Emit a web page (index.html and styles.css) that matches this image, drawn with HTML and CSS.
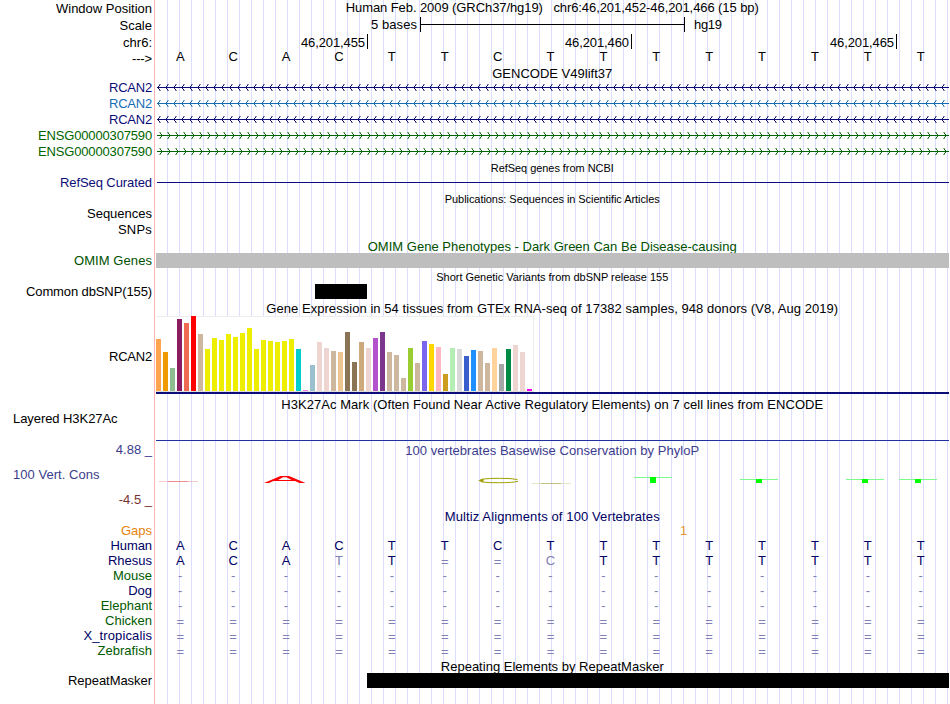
FILE: index.html
```
<!DOCTYPE html>
<html lang="en">
<head>
<meta charset="utf-8">
<title>Genome Browser hg19 chr6:46,201,452-46,201,466</title>
<link rel="stylesheet" href="styles.css">
</head>
<body>
<main class="browser">
  <div class="row h17"><div class="label pad1" data-w="96">Window Position</div><div class="title" data-w="413">Human Feb. 2009 (GRCh37/hg19) &nbsp; chr6:46,201,452-46,201,466 (15 bp)</div></div>
  <div class="row h17"><div class="label pad1">Scale</div>
    <svg class="plot" viewBox="155 17 794 17"><path class="axis" d="M420.5 17v15M684.5 17v15M420 24.5h264"/><text x="371" y="29" textLength="46">5 bases</text><text x="694" y="29" textLength="28">hg19</text></svg></div>
  <div class="row h16"><div class="label pad1">chr6:</div>
    <svg class="plot" viewBox="155 34 794 16"><path class="axis" d="M367.5 34v15M631.5 34v15M896.5 34v15"/><text x="301" y="47" textLength="64">46,201,455</text><text x="565" y="47" textLength="64">46,201,460</text><text x="830" y="47" textLength="64">46,201,465</text></svg></div>
  <div class="row h16"><div class="label pad1" data-w="20">---&gt;</div><div class="bases up1" data-seq="ACACTTCTTTTTTTT"></div></div>

  <div class="row h14"><div class="title" data-w="120">GENCODE V49lift37</div></div>
  <div class="row h16 navy"><div class="label" data-w="43">RCAN2</div><svg class="plot gene" data-dir="-1"></svg></div>
  <div class="row h16 sky"><div class="label" data-w="43">RCAN2</div><svg class="plot gene" data-dir="-1"></svg></div>
  <div class="row h16 navy"><div class="label" data-w="43">RCAN2</div><svg class="plot gene" data-dir="-1"></svg></div>
  <div class="row h16 green"><div class="label" data-w="114">ENSG00000307590</div><svg class="plot gene" data-dir="1"></svg></div>
  <div class="row h16 green"><div class="label" data-w="114">ENSG00000307590</div><svg class="plot gene" data-dir="1"></svg></div>

  <div class="row h15"><div class="title small" data-w="123">RefSeq genes from NCBI</div></div>
  <div class="row h16 navy"><div class="label" data-w="92">RefSeq Curated</div><div class="curated"></div></div>
  <div class="row h15"><div class="title small" data-w="215">Publications: Sequences in Scientific Articles</div></div>
  <div class="row h16"><div class="label" data-w="65">Sequences</div></div>
  <div class="row h17"><div class="label" data-w="34">SNPs</div></div>
  <div class="row h14 dkgreen"><div class="title" data-w="369">OMIM Gene Phenotypes - Dark Green Can Be Disease-causing</div></div>
  <div class="row h16 dkgreen"><div class="label" data-w="78">OMIM Genes</div><div class="block omim"></div></div>
  <div class="row h15"><div class="title small" data-w="232">Short Genetic Variants from dbSNP release 155</div></div>
  <div class="row h17"><div class="label" data-w="126">Common dbSNP(155)</div><div class="block snp"></div></div>

  <div class="row h15"><div class="title" data-w="572">Gene Expression in 54 tissues from GTEx RNA-seq of 17382 samples, 948 donors (V8, Aug 2019)</div></div>
  <div class="row gtex"><div class="label" data-w="43">RCAN2</div><div class="expression"><div class="bars"></div></div></div>

  <div class="row h14"><div class="title" data-w="542">H3K27Ac Mark (Often Found Near Active Regulatory Elements) on 7 cell lines from ENCODE</div></div>
  <div class="row h31"><div class="label left" data-w="104.500">Layered H3K27Ac</div><div class="h3k"></div></div>

  <div class="row cons">
    <div class="scale">
      <div class="label blue">4.88 _</div>
      <div class="label left blue" data-w="86.500">100 Vert. Cons</div>
      <div class="label maroon">-4.5 _</div>
    </div>
    <div>
      <div class="title blue pad1" data-w="294">100 vertebrates Basewise Conservation by PhyloP</div>
      <svg class="plot logo" viewBox="155 458 794 51">
        <path d="M159 481h39v1h-39z" fill="#f08080" opacity=".4"/>
        <path d="M168 481h20v1h-20z" fill="#e87070" opacity=".7"/>
        <path d="M264 483l16.500-7h8.500l16.500 7h-6l-4.500-2h-21.500l-4.500 2zm14-3h13.500l-5-2.800h-3.500z" fill="#f00" fill-rule="evenodd"/>
        <path d="M517.500 479.500q-6-1.200-18-1.200-19.500 0-19.500 2.300t19.500 2.100q13 0 18.500-1.400" fill="none" stroke="#a0a000"/>
        <path d="M478 480.500l5.500-2v4z" fill="#a0a000"/>
        <path d="M532 483h39v1h-39z" fill="#a8a850" opacity=".3"/>
        <path d="M541 483h20v1h-20z" fill="#a8a850" opacity=".6"/>
        <path d="M634 477h38v1h-38zM740 479h38v1h-38zM846 479h38v1h-38zM899 479h38v1h-38z" fill="#7dfa8d"/>
        <path d="M650 477h6v6h-6zM756 479h6v4h-6zM862 479h6v4h-6zM915 479h6v4h-6z" fill="#0f0"/>
      </svg>
    </div>
  </div>

  <div class="row h14 ink"><div class="title" data-w="215">Multiz Alignments of 100 Vertebrates</div></div>
  <div class="row h15 orange"><div class="label" data-w="31">Gaps</div><div class="gap">1</div></div>
  <div class="row h15 ink"><div class="label" data-w="41.500">Human</div><div class="bases" data-seq="ACACTTCTTTTTTTT"></div></div>
  <div class="row h15 ink"><div class="label">Rhesus</div><div class="bases" data-seq="ACAtT==cTTTTTTT"></div></div>
  <div class="row h15 forest"><div class="label">Mouse</div><div class="bases" data-seq="---------------"></div></div>
  <div class="row h15 ink"><div class="label">Dog</div><div class="bases" data-seq="---------------"></div></div>
  <div class="row h15 forest"><div class="label">Elephant</div><div class="bases" data-seq="---------------"></div></div>
  <div class="row h15 forest"><div class="label" data-w="47">Chicken</div><div class="bases" data-seq="==============="></div></div>
  <div class="row h15 ink"><div class="label" data-w="68.500">X_tropicalis</div><div class="bases" data-seq="==============="></div></div>
  <div class="row h15 forest"><div class="label" data-w="54.500">Zebrafish</div><div class="bases" data-seq="==============="></div></div>
  <div class="row h15"><div class="title pad1" data-w="223">Repeating Elements by RepeatMasker</div></div>
  <div class="row h31"><div class="label" data-w="84">RepeatMasker</div><div class="block repeat"></div></div>
</main>
<script src="tracks.js"></script>
</body>
</html>
```
FILE: styles.css
```
body {
  margin: 0;
  background: #fff;
  color: #000;
  font: 13px/15px "Liberation Sans", Arial, sans-serif;
}
.browser {
  width: 949px;
  height: 704px;
  overflow: hidden;
  background:
    linear-gradient(#ffb4b4, #ffb4b4) 154px 0 / 1px 100% no-repeat,
    repeating-linear-gradient(to right, #dcdcff 0 1px, transparent 1px 12px) 167px 0 / 782px 100% no-repeat;
}
.row {
  display: grid;
  grid-template-columns: 155px 794px;
  white-space: nowrap;
}
.h14 { height: 14px; }
.h15 { height: 15px; }
.h16 { height: 16px; }
.h17 { height: 17px; }
.h31 { height: 31px; }
.label { padding-right: 3px; text-align: right; }
.left { padding-left: 13px; text-align: left; }
.title { grid-column: 2; text-align: center; height: 15px; padding-left: 0.5px; }
.small { font-size: 11px; padding-top: 1px; height: 14px; }
.pad1 { padding-top: 1px; }
.plot { display: block; width: 794px; height: 100%; overflow: visible; }
.axis { stroke: #000; fill: none; }

.navy { color: #0c0c78; }
.sky { color: #146cb4; }
.green { color: #006400; }
.dkgreen { color: #005000; }
.forest { color: #005a00; }
.ink { color: #000064; }
.blue { color: #3c3c8c; }
.maroon { color: #783232; }
.orange { color: #e6820a; }

.bases {
  display: grid;
  grid-template-columns: repeat(15, 52.9px);
  margin-left: -1.2px;
  height: 15px;
  text-align: center;
}
.up1 { margin-top: -1px; }
.faint { color: #8080b4; }
.equals { padding-top: 1px; }
.gap { padding-left: 525px; color: #e6962d; }

.gene { fill: currentColor; shape-rendering: crispEdges; }
.gene .ends { opacity: 0.5; }
.curated { height: 1px; margin: 7px 0 0 2px; background: #0c0c78; }
.block { height: 15px; }
.omim { margin-left: 1px; background: #bebebe; }
.snp { margin-left: 160px; width: 52px; background: #000; }
.repeat { margin-left: 212px; background: #000; }

.gtex { height: 81px; }
.gtex .label { padding-top: 33px; }
.expression { height: 76px; margin-left: 1px; border-bottom: 2px solid #0c0c78; }
.bars {
  display: flex;
  align-items: flex-end;
  gap: 2px;
  box-sizing: border-box;
  width: 378px;
  height: 76px;
  padding-bottom: 1px;
  background: #fff;
  box-shadow: inset -1px 1px #eee, inset 0 -1px #ddd;
}
.bar { width: 5px; }
.h3k { height: 1px; margin: 29px 0 0 1px; background: #1e32a0; }
.cons { height: 67px; }
.scale { display: grid; grid-template-rows: 25px 25px 17px; }
.logo { height: 51px; }
```
FILE: tracks.js
```
// Base letters: lower case marks a mismatch, drawn faint.
document.querySelectorAll('.bases').forEach(el => {
  for (const ch of el.dataset.seq) {
    const cell = document.createElement('span');
    cell.textContent = ch.toUpperCase();
    if (!/[ACGT]/.test(ch)) cell.classList.add('faint');
    if (ch === '=') cell.classList.add('equals');
    el.append(cell);
  }
});

// Intron lines with pixel-stepped strand arrows every 8px, fading at the ends.
const dot = (x, y) => `M${x} ${y}h1v1h-1z`;
document.querySelectorAll('.gene').forEach(svg => {
  const dir = Number(svg.dataset.dir);
  let arms = '';
  let ends = '';
  for (let x = 2; x < 792; x += 8) {
    const tip = dir < 0 ? x : x + 5;
    for (const side of [-1, 1]) {
      arms += dot(tip - dir, 7 + side) + dot(tip - dir * 2, 7 + side * 2);
      ends += dot(tip - dir * 3, 7 + side * 3) + dot(tip - dir * 2, 7 + side * 3);
    }
  }
  svg.innerHTML = `<path d="M2 7H794V8H2z"/><path d="${arms}"/><path class="ends" d="${ends}"/>`;
});

// GTEx tissue bars: height and colour.
const tissues = [
  [52,'#ffa54f'],[39,'#ee9a00'],[23,'#8fbc8f'],[72,'#8b1c62'],[68,'#ee6a50'],[75,'#ff0000'],[57,'#cdb79e'],
  [42,'#eeee00'],[53,'#eeee00'],[51,'#eeee00'],[57,'#eeee00'],[54,'#eeee00'],[58,'#eeee00'],[63,'#eeee00'],
  [42,'#eeee00'],[51,'#eeee00'],[50,'#eeee00'],[49,'#eeee00'],[50,'#eeee00'],[52,'#eeee00'],[42,'#00cdcd'],
  [1,'#ee82ee'],[26,'#9ac0cd'],[49,'#eed5d2'],[43,'#eed5d2'],[40,'#cdb79e'],[39,'#eec591'],[59,'#8b7355'],
  [29,'#8b7355'],[49,'#cdaa7d'],[43,'#eed5d2'],[53,'#b452cd'],[59,'#7a378b'],[39,'#cdb79e'],[36,'#cdb79e'],
  [13,'#cdb79e'],[43,'#9acd32'],[28,'#cdb79e'],[50,'#7a67ee'],[47,'#ffd700'],[44,'#ffb6c1'],[17,'#cd9b1d'],
  [43,'#b4eeb4'],[42,'#d9d9d9'],[35,'#3a5fcd'],[41,'#1e90ff'],[40,'#cdb79e'],[28,'#cdb79e'],[43,'#ffd39b'],
  [27,'#a6a6a6'],[42,'#008b45'],[46,'#eed5d2'],[39,'#eed5d2'],[2,'#ff00ff']
];
const bars = document.querySelector('.bars');
for (const [height, color] of tissues) {
  const bar = document.createElement('div');
  bar.className = 'bar';
  bar.style.height = height + 'px';
  bar.style.background = color;
  bars.append(bar);
}

document.querySelectorAll('[data-w]').forEach(el => {
  const range = document.createRange();
  range.selectNodeContents(el);
  const natural = range.getBoundingClientRect().width;
  el.style.letterSpacing = (el.dataset.w - natural) / el.textContent.length + 'px';
});
```
